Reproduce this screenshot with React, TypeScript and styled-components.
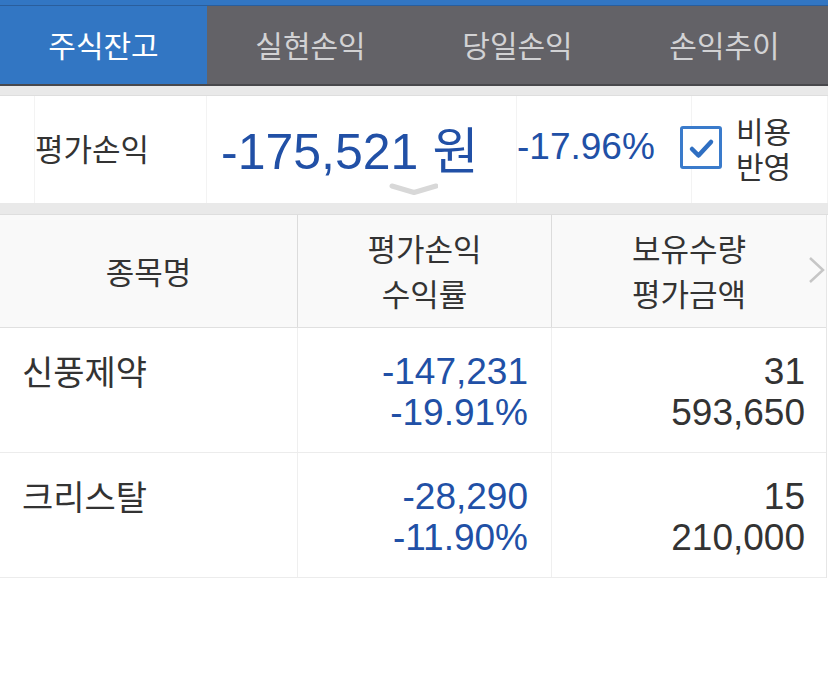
import React from "react";
import styled, { createGlobalStyle } from "styled-components";

const Global = createGlobalStyle`
  html, body { margin: 0; padding: 0; background: #ffffff; }
  body { font-family: "Liberation Sans", "Noto Sans CJK KR", sans-serif; }
  * { box-sizing: border-box; }
`;

const KR = `"Noto Sans CJK KR", "Liberation Sans", sans-serif`;
const NUM = `"Liberation Sans", "Noto Sans CJK KR", sans-serif`;
const BLUE = "#2150a6";
const DARK = "#333333";

const Page = styled.div`
  width: 828px;
  min-height: 695px;
  background: #ffffff;
`;

const TopStripe = styled.div`
  height: 6px;
  background: #3276c3;
  border-bottom: 1px solid #2a5e9c;
`;

const TabBar = styled.div`
  display: grid;
  grid-template-columns: repeat(4, 1fr);
  height: 80px;
  border-bottom: 2px solid #48484c;
  background: #636267;
`;

const Tab = styled.div<{ $active?: boolean }>`
  display: flex;
  align-items: center;
  justify-content: center;
  padding-bottom: 2px;
  background: ${(p) => (p.$active ? "#3276c3" : "#636267")};
  color: ${(p) => (p.$active ? "#ffffff" : "#d2d2d4")};
  font-family: ${KR};
  font-size: 30px;
`;

const Band = styled.div<{ $h: number }>`
  height: ${(p) => p.$h}px;
  background: #e9e9e9;
  border-bottom: 1px solid #dedede;
`;

const Summary = styled.div`
  display: flex;
  height: 107px;
  background: #ffffff;
`;

const SumCell = styled.div<{ $w?: number; $pl?: number }>`
  position: relative;
  ${(p) => (p.$w ? `width: ${p.$w}px; flex: none;` : "flex: 1;")}
  display: flex;
  align-items: center;
  padding-left: ${(p) => p.$pl ?? 0}px;
  padding-bottom: 6px;
  border-right: 1px solid #f3f3f3;
`;

const SumLabel = styled.span`
  font-family: ${KR};
  font-size: 31px;
  color: ${DARK};
  margin-top: 2px;
`;

const BigAmount = styled.span`
  font-family: ${NUM};
  font-size: 50px;
  color: ${BLUE};
  white-space: nowrap;
`;

const Won = styled.span`
  font-family: ${KR};
  font-size: 50px;
  margin-left: 14px;
`;

const Rate = styled.span`
  font-family: ${NUM};
  font-size: 37px;
  color: ${BLUE};
  white-space: nowrap;
`;

const ExpandMark = styled.svg`
  position: absolute;
  left: 181px;
  top: 86px;
`;

const CheckGroup = styled.label`
  display: flex;
  align-items: center;
  gap: 14px;
  margin-left: -12px;
  margin-top: 2px;
`;

const CheckBox = styled.span`
  width: 42px;
  height: 43px;
  border: 3px solid #3a7bcb;
  border-radius: 3px;
  display: flex;
  align-items: center;
  justify-content: center;
  background: #fff;
`;

const CheckText = styled.div`
  display: flex;
  flex-direction: column;
`;

const CheckLine = styled.span`
  display: block;
  height: 35px;
  font-family: ${KR};
  font-size: 30px;
  line-height: 35px;
  color: ${DARK};
  white-space: nowrap;
`;

const Table = styled.div`
  width: 827px;
  border-right: 1px solid #e6e6e6;
`;

const HeaderRow = styled.div`
  position: relative;
  display: grid;
  grid-template-columns: 297px 254px 1fr;
  height: 113px;
  background: #f9f9f9;
  border-bottom: 1px solid #e0e0e0;
`;

const HeadCell = styled.div<{ $first?: boolean }>`
  display: flex;
  flex-direction: column;
  align-items: center;
  justify-content: center;
  font-family: ${KR};
  font-size: 31px;
  line-height: 45px;
  color: ${DARK};
  border-left: ${(p) => (p.$first ? "none" : "1px solid #dcdcdc")};
  padding-bottom: 2px;
`;

const MoreArrow = styled.svg`
  position: absolute;
  right: 0;
  top: 41px;
`;

const Row = styled.div`
  display: grid;
  grid-template-columns: 297px 254px 1fr;
  height: 125px;
  border-bottom: 1px solid #ececec;
`;

const NameCell = styled.div`
  padding: 22px 0 0 22px;
  font-family: ${KR};
  font-size: 34px;
  line-height: 41px;
  color: ${DARK};
`;

const NumCell = styled.div<{ $blue?: boolean; $pr: number }>`
  display: flex;
  flex-direction: column;
  align-items: flex-end;
  padding: 23px ${(p) => p.$pr}px 0 0;
  font-family: ${NUM};
  font-size: 37px;
  line-height: 41px;
  color: ${(p) => (p.$blue ? BLUE : DARK)};
  border-left: 1px solid #efefef;
`;

type Holding = {
  name: string;
  pl: string;
  rate: string;
  qty: string;
  value: string;
};

const holdings: Holding[] = [
  { name: "신풍제약", pl: "-147,231", rate: "-19.91%", qty: "31", value: "593,650" },
  { name: "크리스탈", pl: "-28,290", rate: "-11.90%", qty: "15", value: "210,000" },
];

const tabs = ["주식잔고", "실현손익", "당일손익", "손익추이"];

export default function App() {
  return (
    <Page>
      <Global />
      <TopStripe />
      <TabBar>
        {tabs.map((t, i) => (
          <Tab key={t} $active={i === 0}>
            {t}
          </Tab>
        ))}
      </TabBar>
      <Band $h={10} />
      <Summary>
        <SumCell $w={35} />
        <SumCell $w={172}>
          <SumLabel>평가손익</SumLabel>
        </SumCell>
        <SumCell $w={310} $pl={14}>
          <BigAmount>
            -175,521<Won>원</Won>
          </BigAmount>
          <ExpandMark width="50" height="16" viewBox="0 0 50 16">
            <path
              d="M4 4 L26 10.5 L48 4"
              fill="none"
              stroke="#d8d8d8"
              strokeWidth="5"
              strokeLinecap="round"
              strokeLinejoin="round"
            />
          </ExpandMark>
        </SumCell>
        <SumCell $w={175} $pl={0}>
          <Rate>-17.96%</Rate>
        </SumCell>
        <SumCell>
          <CheckGroup>
            <CheckBox>
              <svg width="30" height="30" viewBox="0 0 30 30">
                <path
                  d="M6 16 L12.5 22.5 L25 9"
                  fill="none"
                  stroke="#2f6fc2"
                  strokeWidth="4.5"
                  strokeLinecap="round"
                  strokeLinejoin="round"
                />
              </svg>
            </CheckBox>
            <CheckText>
              <CheckLine>비용</CheckLine>
              <CheckLine>반영</CheckLine>
            </CheckText>
          </CheckGroup>
        </SumCell>
      </Summary>
      <Band $h={12} />
      <Table>
        <HeaderRow>
          <HeadCell $first>종목명</HeadCell>
          <HeadCell>
            <span>평가손익</span>
            <span>수익률</span>
          </HeadCell>
          <HeadCell>
            <span>보유수량</span>
            <span>평가금액</span>
          </HeadCell>
          <MoreArrow width="18" height="28" viewBox="0 0 18 28">
            <path
              d="M2 2 L15 14 L2 26"
              fill="none"
              stroke="#c6c6c6"
              strokeWidth="2.5"
            />
          </MoreArrow>
        </HeaderRow>
        {holdings.map((h) => (
          <Row key={h.name}>
            <NameCell>{h.name}</NameCell>
            <NumCell $blue $pr={23}>
              <span>{h.pl}</span>
              <span>{h.rate}</span>
            </NumCell>
            <NumCell $pr={21}>
              <span>{h.qty}</span>
              <span>{h.value}</span>
            </NumCell>
          </Row>
        ))}
      </Table>
    </Page>
  );
}
